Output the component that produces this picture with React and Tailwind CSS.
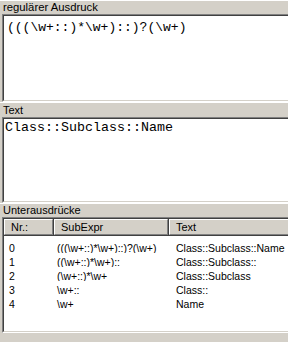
import React from "react";

const rows = [
  ["0", "(((\\w+::)*\\w+)::)?(\\w+)", "Class::Subclass::Name"],
  ["1", "((\\w+::)*\\w+)::", "Class::Subclass::"],
  ["2", "(\\w+::)*\\w+", "Class::Subclass"],
  ["3", "\\w+::", "Class::"],
  ["4", "\\w+", "Name"],
];

function Sunken({ className = "", innerClass = "", children }) {
  return (
    <div className={"border-t border-l border-[#808080] border-b border-r border-b-white border-r-white " + className}>
      <div className={"h-full border-t border-l border-[#404040] border-b border-r border-b-[#d4d0c8] border-r-[#d4d0c8] bg-white " + innerClass}>
        {children}
      </div>
    </div>
  );
}

function HeaderCell({ className = "", children }) {
  return (
    <div className={"h-full border-r border-b border-[#404040] " + className}>
      <div className="h-full border-t border-l border-white border-r border-b border-r-[#808080] border-b-[#808080] bg-[#d4d0c8] pl-[6px] flex items-center text-[11px]">
        {children}
      </div>
    </div>
  );
}

export default function App() {
  return (
    <div className="w-[288px] h-[342px] bg-[#d4d0c8] overflow-hidden font-['Liberation_Sans',Arial,sans-serif] text-black text-[10.5px] leading-none">
      {/* Section 1 */}
      <div className="border-t border-white pl-[2px] w-[300px]">
        <div className="h-[13px] pl-[1px] text-[11.3px] leading-[13px]">regulärer Ausdruck</div>
        <Sunken className="h-[88px]" innerClass="pt-[4px] pl-[3px]">
          <div className="font-['Liberation_Mono',monospace] text-[13px] leading-[15px]">{"(((\\w+::)*\\w+)::)?(\\w+)"}</div>
        </Sunken>
      </div>
      {/* Section 2 */}
      <div className="border-t border-white pl-[2px] w-[300px]">
        <div className="h-[14px] pl-[1px] text-[11px] leading-[14px]">Text</div>
        <Sunken className="h-[86px]" innerClass="pt-[1px] pl-[1px]">
          <div className="font-['Liberation_Mono',monospace] text-[13.33px] leading-[15px]">Class::Subclass::Name</div>
        </Sunken>
      </div>
      {/* Section 3 */}
      <div className="border-t border-white pl-[2px] w-[300px]">
        <div className="h-[13px] pl-[1px] text-[11px] leading-[13px]">Unterausdrücke</div>
        <Sunken className="h-[116px]" innerClass="flex flex-col">
          <div className="flex h-[17px]">
            <HeaderCell className="w-[50px]">Nr.:</HeaderCell>
            <HeaderCell className="w-[115px]">SubExpr</HeaderCell>
            <HeaderCell className="flex-1">Text</HeaderCell>
          </div>
          <div className="pt-[5px]">
            {rows.map((r) => (
              <div key={r[0]} className="flex h-[14px] items-center text-[10.5px]">
                <div className="w-[50px] pl-[5px]">{r[0]}</div>
                <div className="w-[115px] pl-[3px] whitespace-nowrap overflow-hidden">{r[1]}</div>
                <div className="flex-1 pl-[7px] whitespace-nowrap">{r[2]}</div>
              </div>
            ))}
          </div>
        </Sunken>
      </div>
    </div>
  );
}
